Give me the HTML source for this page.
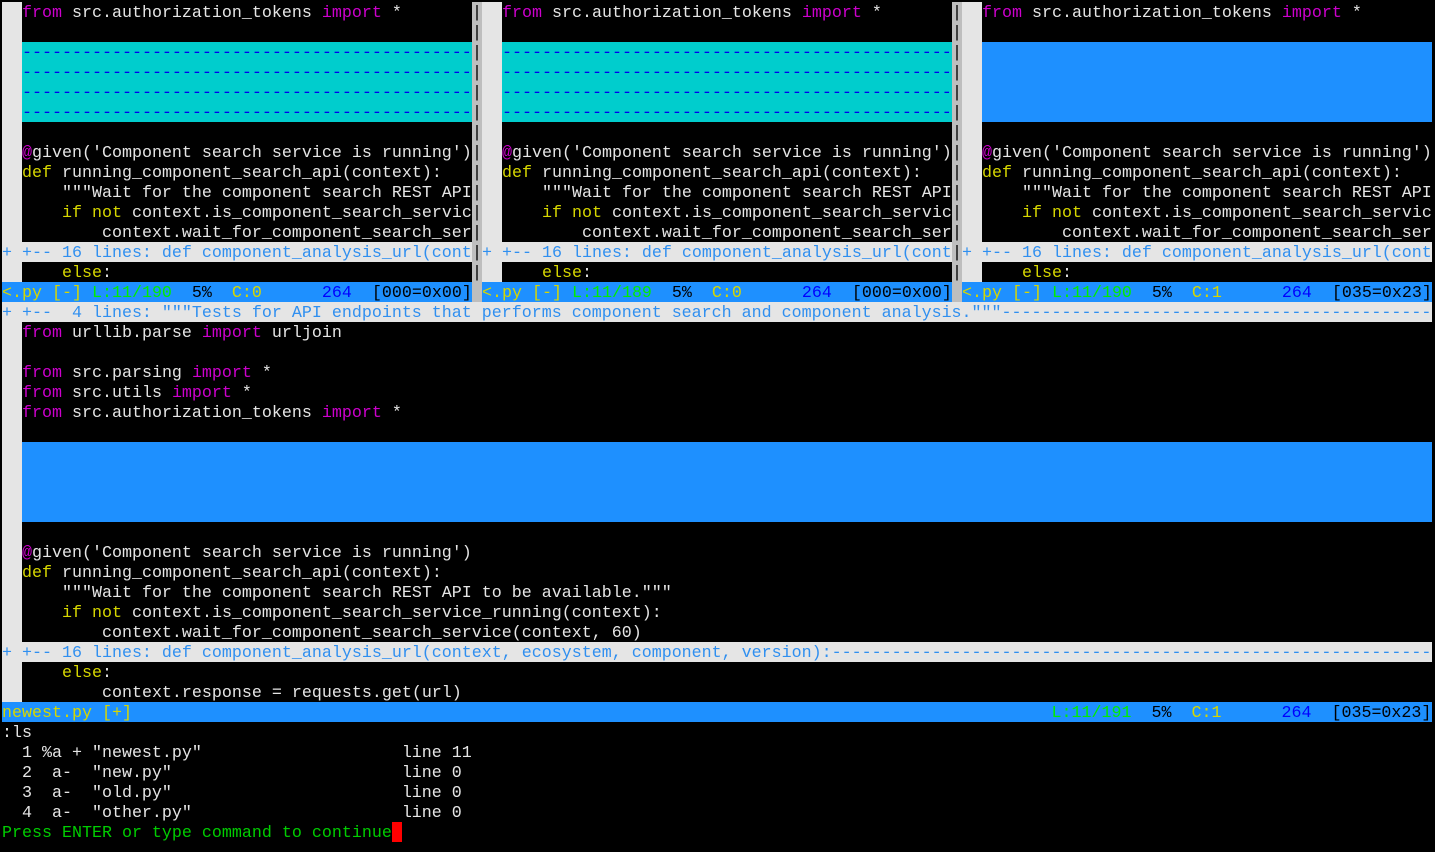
<!DOCTYPE html>
<html><head><meta charset="utf-8"><style>
body{margin:0;background:#000;width:1435px;height:852px;overflow:hidden;position:relative;font-family:"Liberation Mono",monospace;font-size:16.667px;color:#e5e5e5}
.r{position:absolute;height:20px;line-height:24px;white-space:pre;overflow:hidden}
.s{background:#e5e5e5}
.m{color:#cd00cd}.y{color:#d7d700}.g{color:#00ee00}.b{color:#0000ff}.k{color:#000}
.fold{background:#e5e5e5;color:#2f8ff0}
.fill{background:#00cdcd;color:#0000ee}
.blue{background:#1e90ff}
.st{background:#1e90ff;color:#000}
.sep{background:#bebebe;color:#000}
.gr{color:#00cd00}
</style></head><body>

<div class="r s" style="left:2px;top:2px;width:20px;height:280px"></div>
<div class="r s" style="left:482px;top:2px;width:20px;height:280px"></div>
<div class="r s" style="left:962px;top:2px;width:20px;height:280px"></div>
<div class="r s" style="left:2px;top:302px;width:20px;height:400px"></div>
<div class="r sep" style="left:472px;top:2px;width:10px;height:300px;line-height:20px;padding-top:2px;box-sizing:border-box;white-space:pre-line;text-align:center">|
|
|
|
|
|
|
|
|
|
|
|
|
|</div>
<div class="r sep" style="left:952px;top:2px;width:10px;height:300px;line-height:20px;padding-top:2px;box-sizing:border-box;white-space:pre-line;text-align:center">|
|
|
|
|
|
|
|
|
|
|
|
|
|</div>

<div class="r" style="left:22px;top:2px;width:450px"><span class="m">from</span> src.authorization_tokens <span class="m">import</span> *</div>
<div class="r fill" style="left:22px;top:42px;width:450px">---------------------------------------------</div>
<div class="r fill" style="left:22px;top:62px;width:450px">---------------------------------------------</div>
<div class="r fill" style="left:22px;top:82px;width:450px">---------------------------------------------</div>
<div class="r fill" style="left:22px;top:102px;width:450px">---------------------------------------------</div>
<div class="r" style="left:22px;top:142px;width:450px"><span class="m">@</span>given('Component search service is running')</div>
<div class="r" style="left:22px;top:162px;width:450px"><span class="y">def</span> running_component_search_api(context):</div>
<div class="r" style="left:22px;top:182px;width:450px">    """Wait for the component search REST API</div>
<div class="r" style="left:22px;top:202px;width:450px">    <span class="y">if</span> <span class="y">not</span> context.is_component_search_servic</div>
<div class="r" style="left:22px;top:222px;width:450px">        context.wait_for_component_search_ser</div>
<div class="r fold" style="left:2px;top:242px;width:470px">+ +-- 16 lines: def component_analysis_url(cont</div>
<div class="r" style="left:22px;top:262px;width:450px">    <span class="y">else</span>:</div>
<div class="r st" style="left:2px;top:282px;width:470px"><span class="y">&lt;.py [-]</span> <span class="g">L:11/190</span>  5%  <span class="y">C:0</span>      <span class="b">264</span>  [000=0x00]</div>

<div class="r" style="left:502px;top:2px;width:450px"><span class="m">from</span> src.authorization_tokens <span class="m">import</span> *</div>
<div class="r fill" style="left:502px;top:42px;width:450px">---------------------------------------------</div>
<div class="r fill" style="left:502px;top:62px;width:450px">---------------------------------------------</div>
<div class="r fill" style="left:502px;top:82px;width:450px">---------------------------------------------</div>
<div class="r fill" style="left:502px;top:102px;width:450px">---------------------------------------------</div>
<div class="r" style="left:502px;top:142px;width:450px"><span class="m">@</span>given('Component search service is running')</div>
<div class="r" style="left:502px;top:162px;width:450px"><span class="y">def</span> running_component_search_api(context):</div>
<div class="r" style="left:502px;top:182px;width:450px">    """Wait for the component search REST API</div>
<div class="r" style="left:502px;top:202px;width:450px">    <span class="y">if</span> <span class="y">not</span> context.is_component_search_servic</div>
<div class="r" style="left:502px;top:222px;width:450px">        context.wait_for_component_search_ser</div>
<div class="r fold" style="left:482px;top:242px;width:470px">+ +-- 16 lines: def component_analysis_url(cont</div>
<div class="r" style="left:502px;top:262px;width:450px">    <span class="y">else</span>:</div>
<div class="r st" style="left:482px;top:282px;width:470px"><span class="y">&lt;.py [-]</span> <span class="g">L:11/189</span>  5%  <span class="y">C:0</span>      <span class="b">264</span>  [000=0x00]</div>

<div class="r" style="left:982px;top:2px;width:450px"><span class="m">from</span> src.authorization_tokens <span class="m">import</span> *</div>
<div class="r blue" style="left:982px;top:42px;width:450px;height:80px"></div>
<div class="r" style="left:982px;top:142px;width:450px"><span class="m">@</span>given('Component search service is running')</div>
<div class="r" style="left:982px;top:162px;width:450px"><span class="y">def</span> running_component_search_api(context):</div>
<div class="r" style="left:982px;top:182px;width:450px">    """Wait for the component search REST API</div>
<div class="r" style="left:982px;top:202px;width:450px">    <span class="y">if</span> <span class="y">not</span> context.is_component_search_servic</div>
<div class="r" style="left:982px;top:222px;width:450px">        context.wait_for_component_search_ser</div>
<div class="r fold" style="left:962px;top:242px;width:470px">+ +-- 16 lines: def component_analysis_url(cont</div>
<div class="r" style="left:982px;top:262px;width:450px">    <span class="y">else</span>:</div>
<div class="r st" style="left:962px;top:282px;width:470px"><span class="y">&lt;.py [-]</span> <span class="g">L:11/190</span>  5%  <span class="y">C:1</span>      <span class="b">264</span>  [035=0x23]</div>

<div class="r fold" style="left:2px;top:302px;width:1430px">+ +--  4 lines: """Tests for API endpoints that performs component search and component analysis."""--------------------------------------------------------------------------------</div>
<div class="r" style="left:22px;top:322px;width:1410px"><span class="m">from</span> urllib.parse <span class="m">import</span> urljoin</div>
<div class="r" style="left:22px;top:362px;width:1410px"><span class="m">from</span> src.parsing <span class="m">import</span> *</div>
<div class="r" style="left:22px;top:382px;width:1410px"><span class="m">from</span> src.utils <span class="m">import</span> *</div>
<div class="r" style="left:22px;top:402px;width:1410px"><span class="m">from</span> src.authorization_tokens <span class="m">import</span> *</div>
<div class="r blue" style="left:22px;top:442px;width:1410px;height:80px"></div>
<div class="r" style="left:22px;top:542px;width:1410px"><span class="m">@</span>given('Component search service is running')</div>
<div class="r" style="left:22px;top:562px;width:1410px"><span class="y">def</span> running_component_search_api(context):</div>
<div class="r" style="left:22px;top:582px;width:1410px">    """Wait for the component search REST API to be available."""</div>
<div class="r" style="left:22px;top:602px;width:1410px">    <span class="y">if</span> <span class="y">not</span> context.is_component_search_service_running(context):</div>
<div class="r" style="left:22px;top:622px;width:1410px">        context.wait_for_component_search_service(context, 60)</div>
<div class="r fold" style="left:2px;top:642px;width:1430px">+ +-- 16 lines: def component_analysis_url(context, ecosystem, component, version):------------------------------------------------------------------------------------</div>
<div class="r" style="left:22px;top:662px;width:1410px">    <span class="y">else</span>:</div>
<div class="r" style="left:22px;top:682px;width:1410px">        context.response = requests.get(url)</div>
<div class="r st" style="left:2px;top:702px;width:1430px"><span class="y">newest.py [+]</span>                                                                                            <span class="g">L:11/191</span>  5%  <span class="y">C:1</span>      <span class="b">264</span>  [035=0x23]</div>

<div class="r" style="left:2px;top:722px;width:1430px">:ls</div>
<div class="r" style="left:2px;top:742px;width:1430px">  1 %a + "newest.py"                    line 11</div>
<div class="r" style="left:2px;top:762px;width:1430px">  2  a-  "new.py"                       line 0</div>
<div class="r" style="left:2px;top:782px;width:1430px">  3  a-  "old.py"                       line 0</div>
<div class="r" style="left:2px;top:802px;width:1430px">  4  a-  "other.py"                     line 0</div>
<div class="r gr" style="left:2px;top:822px;width:1430px">Press ENTER or type command to continue</div>
<div class="r" style="left:392px;top:822px;width:10px;background:#f00"></div>
</body></html>
